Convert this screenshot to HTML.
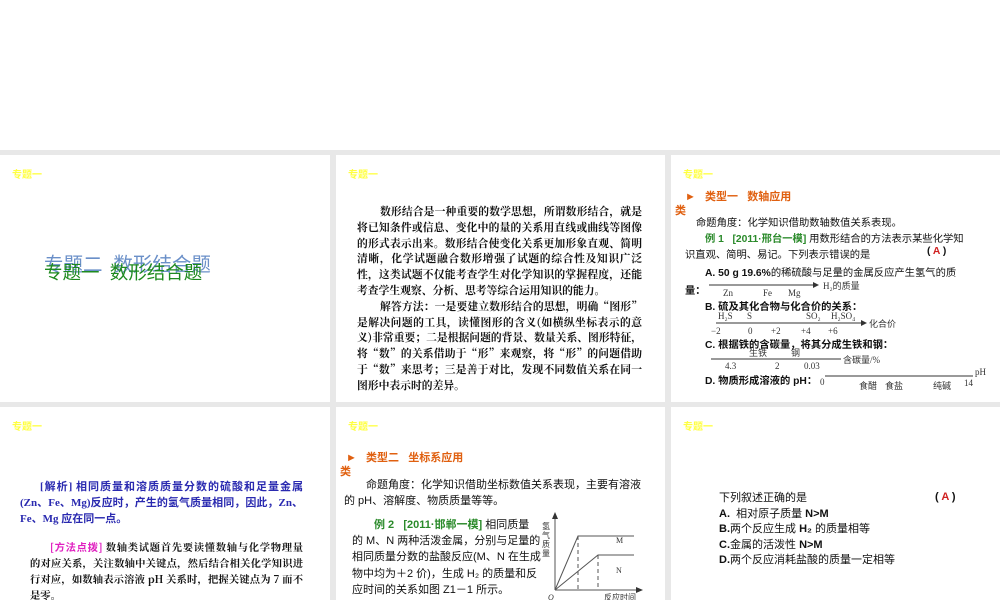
<!DOCTYPE html>
<html><head><meta charset="utf-8"><style>
body{margin:0;width:1000px;height:600px;background:#fff;position:relative;overflow:hidden;font-family:"Liberation Serif","Noto Serif CJK SC",serif;}
.bg{position:absolute;left:0;top:150px;width:1000px;height:450px;background:#e8e8e8;}
.s{position:absolute;background:#fff;overflow:hidden;}
.t{position:absolute;white-space:nowrap;}
.hd{position:absolute;left:12px;top:11px;color:#ffff40;font:bold 10px "Liberation Sans","Noto Sans CJK SC",sans-serif;}
.sans{font-family:"Liberation Sans","Noto Sans CJK SC",sans-serif;}
.b{font-weight:bold}
.j div{text-align:justify;text-align-last:justify;white-space:nowrap;}
.j div.l{text-align-last:left;}
</style></head><body>
<div class="bg"></div>

<!-- slide 1 -->
<div class="s" style="left:0;top:155px;width:330px;height:247px;">
<div class="hd">专题一</div>
<div class="t sans" style="left:44px;top:93px;font-size:19.5px;color:#6a8fc8;">专题二&nbsp;&nbsp;数形结合题</div>
<div class="t sans" style="left:44px;top:104px;font-size:18.5px;color:#1e8a1e;">专题一&nbsp;&nbsp;数形结合题</div>
</div>

<!-- slide 2 -->
<div class="s" style="left:336px;top:155px;width:329px;height:247px;">
<div class="hd">专题一</div>
<div class="t j" style="left:21px;top:49px;width:285px;font-size:10.8px;line-height:15.8px;font-family:'Noto Serif CJK SC',serif;font-weight:bold;color:#111;">
<div style="padding-left:23px">数形结合是一种重要的数学思想，所谓数形结合，就是</div>
<div>将已知条件或信息、变化中的量的关系用直线或曲线等图像</div>
<div>的形式表示出来。数形结合使变化关系更加形象直观、简明</div>
<div>清晰，化学试题融合数形增强了试题的综合性及知识广泛</div>
<div>性，这类试题不仅能考查学生对化学知识的掌握程度，还能</div>
<div class="l">考查学生观察、分析、思考等综合运用知识的能力。</div>
<div style="padding-left:23px">解答方法：一是要建立数形结合的思想，明确“图形”</div>
<div>是解决问题的工具，读懂图形的含义(如横纵坐标表示的意</div>
<div>义)非常重要；二是根据问题的背景、数量关系、图形特征，</div>
<div>将“数”的关系借助于“形”来观察，将“形”的问题借助</div>
<div>于“数”来思考；三是善于对比，发现不同数值关系在同一</div>
<div class="l">图形中表示时的差异。</div>
</div>
</div>

<!-- slide 3 -->
<div class="s sans" style="left:671px;top:155px;width:329px;height:247px;font-size:10.3px;color:#111;">
<div class="hd">专题一</div>
<div class="t b" style="left:14px;top:33px;color:#e06010;font-size:11px;">►&nbsp;&nbsp; 类型一&nbsp;&nbsp; 数轴应用</div>
<div class="t b" style="left:4px;top:47px;color:#e06010;font-size:11px;">类</div>
<div class="t" style="left:25px;top:59px;">命题角度：化学知识借助数轴数值关系表现。</div>
<div class="t" style="left:34px;top:75px;"><span class="b" style="color:#2a8a2a">例 1&nbsp;&nbsp; [2011·邢台一模]</span> 用数形结合的方法表示某些化学知</div>
<div class="t" style="left:14px;top:91px;">识直观、简明、易记。下列表示错误的是</div>
<div class="t b" style="left:256px;top:91px;">( <span style="color:#d02020">A</span> )</div>
<div class="t" style="left:34px;top:109px;"><b>A. 50 g 19.6%</b>的稀硫酸与足量的金属反应产生氢气的质</div>
<div class="t b" style="left:14px;top:127px;">量：</div>
<div class="t b" style="left:34px;top:143px;">B. 硫及其化合物与化合价的关系：</div>
<div class="t b" style="left:34px;top:181px;">C. 根据铁的含碳量，将其分成生铁和钢：</div>
<div class="t b" style="left:34px;top:217px;">D. 物质形成溶液的 pH：</div>
<svg style="position:absolute;left:0;top:0" width="329" height="247" font-family="Liberation Serif" font-size="9" fill="#333">
<line x1="38" y1="130" x2="142" y2="130" stroke="#333"/><polygon points="142,127 148,130 142,133" fill="#333"/>
<text x="52" y="141">Zn</text><text x="92" y="141">Fe</text><text x="117" y="141">Mg</text><text x="152" y="134">H₂的质量</text>
<line x1="45" y1="168" x2="190" y2="168" stroke="#333"/><polygon points="190,165 196,168 190,171" fill="#333"/>
<text x="47" y="164">H₂S</text><text x="76" y="164">S</text><text x="135" y="164">SO₂</text><text x="160" y="164">H₂SO₄</text>
<text x="40" y="179">−2</text><text x="77" y="179">0</text><text x="100" y="179">+2</text><text x="130" y="179">+4</text><text x="157" y="179">+6</text>
<text x="198" y="172">化合价</text>
<line x1="40" y1="204" x2="170" y2="204" stroke="#333"/>
<text x="78" y="201">生铁</text><text x="120" y="201">钢</text><text x="172" y="208">含碳量/%</text>
<text x="54" y="214">4.3</text><text x="104" y="214">2</text><text x="133" y="214">0.03</text>
<line x1="154" y1="221" x2="302" y2="221" stroke="#333"/>
<text x="149" y="230">0</text><text x="188" y="234">食醋</text><text x="214" y="234">食盐</text><text x="262" y="234">纯碱</text><text x="293" y="231">14</text><text x="304" y="220">pH</text>
</svg>
</div>

<!-- slide 4 -->
<div class="s sans" style="left:0;top:407px;width:330px;height:193px;">
<div class="hd">专题一</div>
<div class="t b j" style="left:20px;top:72px;width:283px;font-size:11px;line-height:16px;color:#2a2ab0;font-family:'Liberation Serif','Noto Sans CJK SC',serif;">
<div style="padding-left:20px">[解析] 相同质量和溶质质量分数的硫酸和足量金属</div>
<div>(Zn、Fe、Mg)反应时，产生的氢气质量相同，因此，Zn、</div>
<div class="l">Fe、Mg 应在同一点。</div>
</div>
<div class="t b j" style="left:30px;top:132px;width:273px;font-size:10.3px;line-height:16px;color:#111;font-family:'Noto Serif CJK SC',serif;">
<div style="padding-left:20px"><span style="color:#e020c0;font-family:'Noto Sans CJK SC'">[方法点拨]</span> 数轴类试题首先要读懂数轴与化学物理量</div>
<div>的对应关系，关注数轴中关键点，然后结合相关化学知识进</div>
<div>行对应，如数轴表示溶液 pH 关系时，把握关键点为 7 而不</div>
<div class="l">是零。</div>
</div>
</div>

<!-- slide 5 -->
<div class="s sans" style="left:336px;top:407px;width:329px;height:193px;font-size:11px;color:#111;">
<div class="hd">专题一</div>
<div class="t b" style="left:10px;top:42px;color:#e06010;">►&nbsp;&nbsp; 类型二&nbsp;&nbsp; 坐标系应用</div>
<div class="t b" style="left:4px;top:56px;color:#e06010;">类</div>
<div class="t" style="left:30px;top:69px;">命题角度：化学知识借助坐标数值关系表现，主要有溶液</div>
<div class="t" style="left:8px;top:85px;">的 pH、溶解度、物质质量等等。</div>
<div class="t" style="left:16px;top:110px;line-height:16.2px;font-size:11px;">
<div style="padding-left:22px"><span class="b" style="color:#2a8a2a">例 2&nbsp;&nbsp; [2011·邯郸一模]</span> 相同质量</div>
<div>的 M、N 两种活泼金属，分别与足量的</div>
<div>相同质量分数的盐酸反应(M、N 在生成</div>
<div>物中均为＋2 价)，生成 H₂ 的质量和反</div>
<div>应时间的关系如图 Z1－1 所示。</div>
</div>
<svg style="position:absolute;left:0;top:0" width="329" height="193" font-family="Liberation Serif" font-size="8" fill="#333" stroke="#555">
<line x1="219" y1="183" x2="219" y2="112"/><polygon points="216,112 219,105 222,112" fill="#333" stroke="none"/>
<line x1="219" y1="183" x2="300" y2="183"/><polygon points="300,180 307,183 300,186" fill="#333" stroke="none"/>
<polyline points="219,183 242,129 298,129" fill="none"/>
<polyline points="219,183 262,148 298,148" fill="none"/>
<line x1="242" y1="129" x2="242" y2="183" stroke-dasharray="4,3"/>
<line x1="262" y1="148" x2="262" y2="183" stroke-dasharray="4,3"/>
<text x="280" y="136" stroke="none">M</text><text x="280" y="166" stroke="none">N</text>
<text x="212" y="193" stroke="none" font-style="italic">O</text>
<text x="268" y="193" stroke="none">反应时间</text>
<g stroke="none" font-size="8"><text x="206" y="122">氢</text><text x="206" y="131">气</text><text x="206" y="140">质</text><text x="206" y="149">量</text></g>
</svg>
</div>

<!-- slide 6 -->
<div class="s sans" style="left:671px;top:407px;width:329px;height:193px;font-size:11px;color:#111;">
<div class="hd">专题一</div>
<div class="t" style="left:48px;top:84px;line-height:15.5px;">
<div>下列叙述正确的是</div>
<div><b>A.</b>&nbsp; 相对原子质量 <b>N&gt;M</b></div>
<div><b>B.</b>两个反应生成 <b>H₂</b> 的质量相等</div>
<div><b>C.</b>金属的活泼性 <b>N&gt;M</b></div>
<div><b>D.</b>两个反应消耗盐酸的质量一定相等</div>
</div>
<div class="t b" style="left:264px;top:84px;">( <span style="color:#d02020">A</span> )</div>
</div>
</body></html>
